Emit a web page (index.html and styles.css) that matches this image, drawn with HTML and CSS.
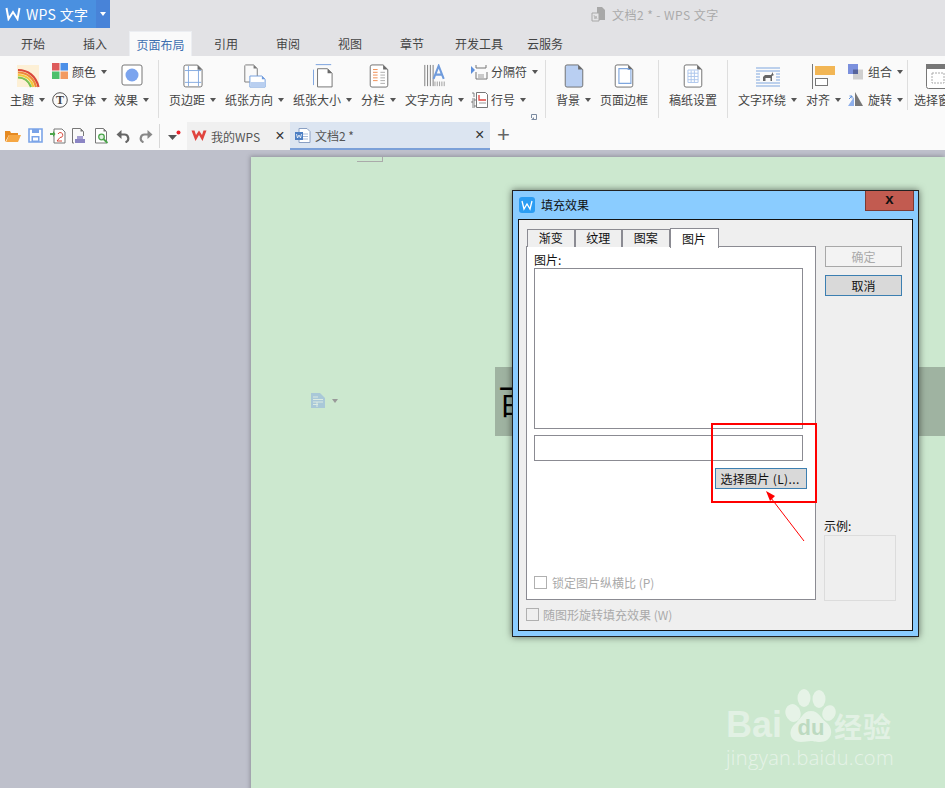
FILE: index.html
```html
<!DOCTYPE html>
<html lang="zh-CN">
<head>
<meta charset="utf-8">
<title>文档2 * - WPS 文字</title>
<link rel="stylesheet" href="styles.css">
</head>
<body>
<header class="titlebar">
  <div class="app-menu">
    <div class="app-name">
      <svg class="app-logo" width="16" height="14" viewBox="0 0 16 14"><path d="M1.500 1 L3.500 12 L8 5 L12.500 12 L14.500 1" fill="none" stroke="#fff" stroke-width="2"/></svg>
      <span>WPS 文字</span>
    </div>
    <div class="app-drop"><i class="tri white"></i></div>
  </div>
  <div class="doc-title">
    <svg width="15" height="15" viewBox="0 0 15 15"><path d="M6 0h5l3 3v10H6z" fill="#a8a8a8"/><path d="M1 6h7v8H1z" fill="#e4e4e6" stroke="#a8a8a8"/><path d="M3 8l1 4 1-3 1 3" stroke="#a8a8a8" fill="none" stroke-width=".7"/></svg>
    <span>文档2 * - WPS 文字</span>
  </div>
</header>

<nav class="tabs">
  <a class="tab first">开始</a>
  <a class="tab">插入</a>
  <a class="tab active">页面布局</a>
  <a class="tab spaced">引用</a>
  <a class="tab">审阅</a>
  <a class="tab">视图</a>
  <a class="tab">章节</a>
  <a class="tab dev">开发工具</a>
  <a class="tab last">云服务</a>
</nav>

<section class="ribbon">
  <div class="group g1">
    <div class="tool">
      <div class="icon"><svg width="24" height="24" viewBox="0 0 24 24"><rect x="1" y="1" width="22" height="22" fill="#fdf0d6"/><g fill="none" stroke-width="2.200"><path d="M2 6 C12 6 20 12 22.500 23" stroke="#d9483b"/><path d="M2 8.500 C11 8.500 18 14 20 23" stroke="#ee8a3a"/><path d="M2 11 C10 11 15.500 16 17.500 23" stroke="#f0c93c"/><path d="M2 13.500 C9 13.500 13 18 15 23" stroke="#7cc255"/><path d="M2 16 C7 16 11 19 12.500 23" stroke="#fdf0d6"/></g></svg></div>
      <div class="label">主题<i class="tri"></i></div>
    </div>
    <div class="small-col">
      <div class="small"><svg class="sm swatch" width="16" height="16" viewBox="0 0 16 16"><rect x="0" y="0" width="7.500" height="7.500" fill="#dd5b5b"/><rect x="8.500" y="0" width="7.500" height="7.500" fill="#4b8fe8"/><rect x="0" y="8.500" width="7.500" height="7.500" fill="#4cc06c"/><rect x="8.500" y="8.500" width="7.500" height="7.500" fill="#f29b62"/></svg>颜色<i class="tri"></i></div>
      <div class="small"><svg class="sm" width="16" height="16" viewBox="0 0 16 16"><circle cx="8" cy="8" r="7.300" fill="none" stroke="#555"/><text x="8" y="12" text-anchor="middle" class="t-glyph">T</text></svg>字体<i class="tri"></i></div>
    </div>
    <div class="tool">
      <div class="icon"><svg width="22" height="22" viewBox="0 0 22 22"><rect x="1" y="1" width="20" height="20" rx="2" fill="#fff" stroke="#777"/><circle cx="11" cy="11" r="6.500" fill="#7ba4ee"/></svg></div>
      <div class="label">效果<i class="tri"></i></div>
    </div>
  </div>
  <div class="sep"></div>

  <div class="group g2">
    <div class="tool">
      <div class="icon"><svg width="20" height="24" viewBox="0 0 22 26"><path d="M3 1h13l5 5v17a2 2 0 0 1-2 2H3a2 2 0 0 1-2-2V3a2 2 0 0 1 2-2z" fill="#fff" stroke="#6a6a6a"/><path d="M16 1l5 5h-5z" fill="#6a6a6a"/><path d="M2 7h18M2 20h18M6 2v22M17 6v18" stroke="#7ea6de" fill="none"/></svg></div>
      <div class="label">页边距<i class="tri"></i></div>
    </div>
    <div class="tool">
      <div class="icon"><svg width="23" height="24" viewBox="0 0 24 26"><path d="M2 1h9l4 4v8M1.500 1.500v18H7" fill="none" stroke="#777"/><path d="M11 1l4 4h-4z" fill="#777"/><path d="M7 13h13l3.500 3.500V25H7z" fill="#fff" stroke="#6f9bdc"/><path d="M7.500 19.500h16V25H7.500z" fill="#b9cff0"/><path d="M20 13l3.500 3.500H20z" fill="#6f9bdc"/></svg></div>
      <div class="label">纸张方向<i class="tri"></i></div>
    </div>
    <div class="tool">
      <div class="icon"><svg width="20" height="24" viewBox="0 0 22 26"><path d="M3 0.500h17" stroke="#6f9bdc" fill="none"/><path d="M.5 6v17" stroke="#6f9bdc" fill="none"/><path d="M5 5h11l5 5v15H5z" fill="#fff" stroke="#6a6a6a"/><path d="M16 5l5 5h-5z" fill="#6a6a6a"/></svg></div>
      <div class="label">纸张大小<i class="tri"></i></div>
    </div>
    <div class="tool">
      <div class="icon"><svg width="20" height="24" viewBox="0 0 21 26"><path d="M3 1h12l5 5v17a2 2 0 0 1-2 2H3a2 2 0 0 1-2-2V3a2 2 0 0 1 2-2z" fill="#fff" stroke="#6a6a6a"/><path d="M15 1l5 5h-5z" fill="#6a6a6a"/><path d="M4 6h5M4 9h5M4 12h5M4 15h5M4 18h5" stroke="#ef8a4d"/><path d="M12 9h5M12 12h5M12 15h5M12 18h5M12 21h5" stroke="#a9a9a9"/></svg></div>
      <div class="label">分栏<i class="tri"></i></div>
    </div>
    <div class="tool">
      <div class="icon"><svg width="23" height="24" viewBox="0 0 24 26"><path d="M1.500 1v23M4.500 1v23M7.500 1v23M10.500 1v23" stroke="#777"/><path d="M11 16 L16.500 2 L22 16 M13 11.500h7" fill="none" stroke="#6f9bdc" stroke-width="2.200"/><path d="M12.500 19v5M15 19v5M17.500 19v5M20 19v5M22.500 19v5" stroke="#999"/></svg></div>
      <div class="label">文字方向<i class="tri"></i></div>
    </div>
    <div class="small-col">
      <div class="small"><svg class="sm sm-wide" width="17" height="16" viewBox="0 0 17 16"><path d="M0 2l4 4-4 4z" fill="#5d8fdc"/><path d="M5 1v3h10V1M5 8v7h11V8" fill="none" stroke="#777"/><path d="M7 11h6M7 13h6" stroke="#999"/></svg>分隔符<i class="tri"></i></div>
      <div class="small"><svg class="sm sm-wide" width="17" height="16" viewBox="0 0 17 16"><path d="M5.500.5h9l2 2v13h-11z" fill="#fff" stroke="#777"/><path d="M8 3v5h7" fill="none" stroke="#e0443e" stroke-width="1.300"/><path d="M8 11h7" stroke="#999"/><path d="M1 1h2v4M1 7h3v2H1v2h3M1 13h3v2H1" fill="none" stroke="#666" stroke-width=".8"/></svg>行号<i class="tri"></i></div>
    </div>
    <svg class="launcher" width="6" height="6" viewBox="0 0 6 6"><path d="M.5 4V.5H5.500V5.500H2.500" fill="none" stroke="#7a8aa0"/><path d="M0 6l3-3v3z" fill="#7a8aa0"/></svg>
  </div>
  <div class="sep"></div>

  <div class="group g3">
    <div class="tool">
      <div class="icon"><svg width="20" height="24" viewBox="0 0 21 26"><path d="M3 1h12l5 5v17a2 2 0 0 1-2 2H3a2 2 0 0 1-2-2V3a2 2 0 0 1 2-2z" fill="#b9cff2" stroke="#6a6a6a"/><path d="M15 1l5 5h-5z" fill="#6a6a6a"/></svg></div>
      <div class="label">背景<i class="tri"></i></div>
    </div>
    <div class="tool">
      <div class="icon"><svg width="20" height="24" viewBox="0 0 21 26"><path d="M3 1h12l5 5v17a2 2 0 0 1-2 2H3a2 2 0 0 1-2-2V3a2 2 0 0 1 2-2z" fill="#fff" stroke="#6a6a6a"/><path d="M15 1l5 5h-5z" fill="#6a6a6a"/><path d="M5 5h10v1h3v15H5z" fill="none" stroke="#7ea6de" stroke-width="1.200"/></svg></div>
      <div class="label">页面边框</div>
    </div>
  </div>
  <div class="sep"></div>

  <div class="group g3">
    <div class="tool">
      <div class="icon"><svg width="20" height="24" viewBox="0 0 21 26"><path d="M3 1h12l5 5v17a2 2 0 0 1-2 2H3a2 2 0 0 1-2-2V3a2 2 0 0 1 2-2z" fill="#fff" stroke="#6a6a6a"/><path d="M15 1l5 5h-5z" fill="#6a6a6a"/><path d="M5 6.500h11V20H5zM5 10h11M5 13.500h11M5 17h11M8.500 7v13M12 7v13" fill="none" stroke="#a9c3ec"/></svg></div>
      <div class="label">稿纸设置</div>
    </div>
  </div>
  <div class="sep"></div>

  <div class="group g4">
    <div class="tool">
      <div class="icon"><svg width="24" height="20" viewBox="0 0 24 20" class="wrap-icon"><path d="M0 1h24M0 4h24M0 7h4M20 7h4M0 10h4M20 10h4M0 13h4M20 13h4M0 16h24M0 19h24" stroke="#7ea6de"/><path d="M7 14v-4l2-2h6l2-3v2l1 1-2 1v5h-1.500v-3H9.500v3z" fill="#666"/></svg></div>
      <div class="label">文字环绕<i class="tri"></i></div>
    </div>
    <div class="tool">
      <div class="icon"><svg width="23" height="25" viewBox="0 0 23 25"><path d="M.5 0v25" stroke="#777"/><rect x="3" y="2" width="20" height="9" fill="#f2b655"/><rect x="3.500" y="14.500" width="12" height="7" fill="#fff" stroke="#777"/></svg></div>
      <div class="label">对齐<i class="tri"></i></div>
    </div>
    <div class="small-col narrow">
      <div class="small"><svg class="sm sm-big" width="15" height="16" viewBox="0 0 15 16"><rect x="5" y="5.500" width="10" height="10" fill="#cfcfcf"/><rect x="0" y="0" width="10" height="10" fill="#7b90dd"/><rect x="5" y="5.500" width="5" height="4.500" fill="#56649c"/></svg>组合<i class="tri"></i></div>
      <div class="small"><svg class="sm sm-big" width="15" height="16" viewBox="0 0 15 16"><path d="M7 0 V14 H15z" fill="#777"/><path d="M6 5 V14 H0z" fill="#8fb0ec"/><path d="M1 7l3-3M4 4H1.500M4 4v2.500" stroke="#5d8fdc" fill="none"/></svg>旋转<i class="tri"></i></div>
    </div>
  </div>
  <div class="sep short"></div>

  <div class="group g5">
    <div class="tool">
      <div class="icon"><svg width="24" height="25" viewBox="0 0 24 25"><rect x=".5" y=".5" width="23" height="24" rx="2" fill="#fff" stroke="#777"/><rect x="0" y="0" width="24" height="5" fill="#777"/><rect x="6" y="9" width="12" height="10" fill="none" stroke="#aaa" stroke-dasharray="2 1"/></svg></div>
      <div class="label">选择窗格</div>
    </div>
  </div>
</section>

<section class="quickbar">
  <div class="qa">
    <svg width="16" height="14" viewBox="0 0 16 14"><path d="M0 2h5l1 2h7v2H4L0 13z" fill="#e58a22"/><path d="M4 6h12l-3 7H1z" fill="#f6a743"/></svg>
  </div>
  <div class="qa">
    <svg width="15" height="15" viewBox="0 0 15 15"><path d="M1 1h13v13H1z" fill="#fff" stroke="#7ba4e8" stroke-width="1.600"/><rect x="4" y="1" width="7" height="4" fill="#7ba4e8"/><rect x="3.500" y="8" width="8" height="6" fill="#7ba4e8"/><rect x="5" y="9.500" width="5" height="3" fill="#fff"/></svg>
  </div>
  <div class="qa tight">
    <svg width="16" height="16" viewBox="0 0 16 16"><path d="M4 1h8l3 3v11H4z" fill="#fff" stroke="#777"/><path d="M0 5h3V3l2.500 3L3 9V7H0z" fill="#4ca64c"/><path d="M8 6a2.500 2.500 0 1 1 2 3.500L7 13h5" fill="none" stroke="#d9483b"/></svg>
  </div>
  <div class="qa">
    <svg width="16" height="16" viewBox="0 0 16 16"><path d="M1.500.5h8l3 3V8M1.500.5V15H3" fill="none" stroke="#777"/><path d="M9.500.5l3 3h-3z" fill="#777"/><path d="M6 8h6v3H6z" fill="#a59fd0"/><path d="M4 11h10v4H4z" fill="#8b85c4"/></svg>
  </div>
  <div class="qa">
    <svg width="15" height="16" viewBox="0 0 15 16"><path d="M1.500.5h8l3 3V15h-11z" fill="#fff" stroke="#777"/><path d="M9.500.5l3 3h-3z" fill="#777"/><circle cx="7.500" cy="9" r="2.800" fill="#dff0df" stroke="#4ca64c" stroke-width="1.300"/><path d="M9.500 11l4 4" stroke="#4ca64c" stroke-width="1.800"/></svg>
  </div>
  <div class="qa">
    <svg width="14" height="14" viewBox="0 0 14 14"><path d="M2.500 5.500 H8 a4 4 0 0 1 1.500 7.800" fill="none" stroke="#666" stroke-width="2.200"/><path d="M5.500 1 L0.500 5.500 L5.500 10z" fill="#666"/></svg>
  </div>
  <div class="qa redo">
    <svg width="14" height="14" viewBox="0 0 14 14"><path d="M11.500 5.500 H6 a4 4 0 0 0 -1.500 7.800" fill="none" stroke="#888" stroke-width="2.200"/><path d="M8.500 1 L13.500 5.500 L8.500 10z" fill="#888"/></svg>
  </div>
  <div class="qsep"></div>
  <div class="mark">
    <svg width="14" height="12" viewBox="0 0 14 12"><path d="M0 5h9L4.500 10z" fill="#555"/><circle cx="10.500" cy="2.500" r="2" fill="#e8212a"/></svg>
  </div>
  <div class="doctab home">
    <svg class="wps-red" width="16" height="12" viewBox="0 0 16 12"><path d="M.5 .5 L4.500 11 L8 5 L11.500 11 L15.500 .5 L12.500 .5 L11 5 L8 .5 L5 5 L3.500 .5z" fill="#e0443e"/></svg>
    <span>我的WPS</span>
    <span class="close">×</span>
  </div>
  <div class="doctab current">
    <svg class="doc-ic" width="16" height="15" viewBox="0 0 16 15"><path d="M4 .5h8l3 3V14.500H4z" fill="#fff" stroke="#8aa0c4"/><path d="M7 6h6M7 8.500h6M7 11h6" stroke="#a9bcd9"/><rect x="0" y="4" width="8" height="8" fill="#4c7fc4"/><path d="M1.500 6l1 4 1.500-3 1.500 3 1-4" stroke="#fff" fill="none" stroke-width=".8"/></svg>
    <span>文档2 *</span>
    <span class="close">×</span>
  </div>
  <div class="plus">+</div>
</section>

<main class="canvas">
  <div class="page">
    <div class="margin-mark"></div>
    <div class="para-float">
      <svg width="14" height="15" viewBox="0 0 14 15"><path d="M0 0h9l5 5v10H0z" fill="#a9c8d8"/><path d="M2 4h5M2 6.500h10M2 9h10M2 11.500h5M6 9v5" stroke="#dcebe2" fill="none"/></svg>
      <i class="tri pale"></i>
    </div>
    <div class="band"><span>百</span></div>
    <div class="watermark">
      <div class="wm-row">
        <span class="wm-bai">Bai</span>
        <svg class="wm-paw" width="52" height="58" viewBox="0 0 52 58">
          <ellipse cx="8" cy="24" rx="7.500" ry="9" transform="rotate(-18 8 24)" fill="#e9f5ea"/>
          <ellipse cx="19" cy="9" rx="6.500" ry="9" fill="#e9f5ea"/>
          <ellipse cx="34" cy="10" rx="6.500" ry="9" fill="#e9f5ea"/>
          <ellipse cx="44" cy="24" rx="6.500" ry="8" transform="rotate(22 44 24)" fill="#e9f5ea"/>
          <path d="M26 22 C34 22 36 30 42 34 C50 42 46 53 35 53 C30 53 28 52 26 52 C23 52 20 53 16 53 C5 53 2 42 10 35 C16 30 18 22 26 22z" fill="#e9f5ea"/>
          <text x="26" y="46" text-anchor="middle" class="wm-du">du</text>
        </svg>
        <span class="wm-jy">经验</span>
      </div>
      <div class="wm-url">jingyan.baidu.com</div>
    </div>
  </div>

  <div class="dialog">
    <div class="dlg-title">
      <svg class="dlg-logo" width="16" height="16" viewBox="0 0 16 16"><rect width="16" height="16" rx="3" fill="#2b9df3"/><path d="M3 4l2 8 3-5 3 5 2-8" fill="none" stroke="#fff" stroke-width="1.300"/></svg>
      <span class="dlg-name">填充效果</span>
      <div class="dlg-close">x</div>
    </div>
    <div class="dlg-body">
      <div class="dlg-left">
        <div class="dlg-tabs">
          <div class="dtab">渐变</div>
          <div class="dtab">纹理</div>
          <div class="dtab">图案</div>
          <div class="dtab on">图片</div>
        </div>
        <div class="panel">
          <div class="field-label">图片:</div>
          <div class="listbox"></div>
          <div class="textbox"></div>
          <button class="btn pick">选择图片 (L)...</button>
          <label class="check inner"><i class="box"></i>锁定图片纵横比 (P)</label>
        </div>
        <label class="check outer"><i class="box"></i>随图形旋转填充效果 (W)</label>
      </div>
      <div class="dlg-right">
        <button class="btn side disabled">确定</button>
        <button class="btn side focus">取消</button>
        <div class="preview-label">示例:</div>
        <div class="preview"></div>
      </div>
    </div>
    <svg class="annot" width="405" height="445" viewBox="0 0 405 445">
      <rect x="199" y="233" width="104" height="78" fill="none" stroke="#f00" stroke-width="2"/>
      <path d="M291 350 L258 307" stroke="#f00" fill="none"/>
      <path d="M253 300 L262 305 L257 310z" fill="#f00"/>
    </svg>
  </div>
</main>
</body>
</html>
```

FILE: styles.css
```css
* { box-sizing: border-box; }
html, body { margin: 0; padding: 0; }
body {
  width: 945px;
  height: 788px;
  overflow: hidden;
  background: #e2e2e5;
  font-family: "Noto Sans CJK SC", "Liberation Sans", sans-serif;
  font-size: 12px;
  color: #444;
  display: flex;
  flex-direction: column;
}
svg { display: block; flex: none; }

.tri {
  display: inline-block;
  width: 0;
  height: 0;
  margin-left: 5px;
  border-left: 3px solid transparent;
  border-right: 3px solid transparent;
  border-top: 4px solid #555;
  flex: none;
}
.tri.white { border-top-color: #fff; margin: 0; }
.tri.pale { border-top-color: #999; margin-left: 7px; }

/* title bar */
.titlebar { height: 28px; display: flex; flex: none; }
.app-menu { display: flex; width: 110px; color: #fff; }
.app-name {
  width: 96px;
  background: #4a90e0;
  display: flex;
  align-items: center;
  padding-left: 5px;
  gap: 5px;
  font-size: 14px;
  letter-spacing: .3px;
}
.app-drop {
  width: 14px;
  background: #4883d8;
  display: flex;
  align-items: center;
  justify-content: center;
}
.doc-title {
  margin-left: 481px;
  display: flex;
  align-items: center;
  gap: 6px;
  color: #aaa;
  letter-spacing: .45px;
}

/* tabs */
.tabs { height: 28px; display: flex; align-items: flex-end; flex: none; }
.tab {
  width: 62px;
  height: 25px;
  line-height: 26px;
  text-align: center;
  color: #444;
}
.tab.first { margin-left: 2px; }
.tab.spaced { margin-left: 3px; }
.tab.dev { margin-left: 5px; }
.tab.last { width: 36px; margin-left: 17px; }
.tab.active {
  width: 63px;
  margin-left: 3px;
  background: #fafafa;
  border: 1px solid #eceef2;
  border-bottom: 0;
  color: #3f6fb0;
}

/* ribbon */
.ribbon {
  height: 66px;
  flex: none;
  background: #fafafa;
  display: flex;
  align-items: flex-start;
  padding-top: 8px;
  position: relative;
  overflow: hidden;
}
.group { display: flex; align-items: flex-start; padding: 0 10px; gap: 9px; flex: none; height: 44px; }
.group.g1 { width: 158px; gap: 7px; }
.group.g2 { width: 386px; position: relative; }
.group.g2 .small-col { margin-left: -2px; }
.group.g4 { width: 179px; gap: 9px; }
.group.g4 .small-col { margin-left: -2px; }
.group.g5 { padding: 0 0 0 6px; }
.launcher { position: absolute; right: 8px; top: 50px; }
.sep {
  width: 1px;
  height: 58px;
  margin-top: -4px;
  flex: none;
  background: #dedede;
}
.sep.short { height: 50px; }
.tool { display: flex; flex-direction: column; align-items: center; flex: none; height: 44px; }
.tool .icon {
  height: 28px;
  width: 100%;
  display: flex;
  justify-content: center;
  align-items: flex-start;
}
.wrap-icon { margin-top: 3px; }
.label { height: 16px; line-height: 16px; white-space: nowrap; display: flex; align-items: center; }
.small-col { display: flex; flex-direction: column; justify-content: space-between; height: 44px; flex: none; }
.small { height: 16px; line-height: 16px; display: flex; align-items: center; white-space: nowrap; }
.sm { margin-right: 4px; }
.swatch { margin-top: -2px; }
.sm-wide { margin-right: 3px; }
.sm-big { margin-right: 5px; }
.t-glyph { font-family: "Liberation Serif", serif; font-size: 12px; font-weight: 700; fill: #444; }

/* quick access */
.quickbar {
  height: 28px;
  flex: none;
  background: #fafafa;
  display: flex;
  align-items: stretch;
  padding-left: 5px;
}
.qa { display: flex; align-items: center; margin-right: 7px; padding-bottom: 1px; }
.qa.tight { margin-right: 5px; }
.qa.redo { margin-left: 2px; margin-right: 6px; }
.qsep { width: 1px; height: 24px; background: #d8d8d8; align-self: center; margin: 0 8px 0 0; }
.mark { display: flex; align-items: center; width: 19px; }
.doctab { display: flex; align-items: center; color: #555; }
.doctab.home { width: 103px; background: #f0f0f0; padding-left: 4px; gap: 4px; }
.doctab.current {
  width: 200px;
  background: #dce5f1;
  border-bottom: 2px solid #7ba0d8;
  padding-left: 5px;
  gap: 4px;
}
.home .close { margin-left: 11px; }
.current .close { margin-left: 117px; }
.close { font-size: 16px; color: #333; font-family: "Liberation Sans", sans-serif; }
.plus { font-size: 22px; color: #666; margin-left: 7px; line-height: 26px; font-family: "Liberation Sans", sans-serif; }

/* canvas */
.canvas {
  flex: 1;
  position: relative;
  background: #bec0cb;
  padding: 7px 0 0 251px;
  overflow: hidden;
}
.page {
  width: 694px;
  height: 640px;
  background: #cce8cf;
  position: relative;
  box-shadow: -1px -1px 4px rgba(90, 90, 100, .45);
}
.margin-mark {
  width: 26px;
  height: 5px;
  margin-left: 106px;
  border-right: 1px solid #aaa;
  border-bottom: 1px solid #aaa;
}
.para-float {
  position: absolute;
  left: 60px;
  top: 236px;
  display: flex;
  align-items: center;
}
.band {
  position: absolute;
  left: 244px;
  top: 210px;
  width: 450px;
  height: 69px;
  background: #9fb3a1;
  color: #000;
  font-size: 33px;
  line-height: 67px;
  padding-left: 3px;
  overflow: hidden;
}
.watermark { position: absolute; left: 475px; top: 532px; color: #e6f3e8; }
.wm-row { display: flex; align-items: flex-end; height: 61px; }
.wm-bai { font-family: "Liberation Sans", sans-serif; font-weight: 700; font-size: 36px; line-height: 40px; margin-bottom: 5px; opacity: .85; }
.wm-paw { margin: 0 -3px 3px 3px; opacity: .9; }
.wm-du { font-family: "Liberation Sans", sans-serif; font-size: 22px; font-weight: 700; fill: #bcd9c0; }
.wm-jy { font-size: 28px; line-height: 34px; font-weight: 700; margin-bottom: 7px; opacity: .85; letter-spacing: 1px; }
.wm-url { font-family: "Open Sans", sans-serif; font-size: 20px; line-height: 24px; font-weight: 300; letter-spacing: .35px; margin-top: -4px; }

/* dialog */
.dialog {
  position: absolute;
  left: 512px;
  top: 40px;
  width: 407px;
  height: 447px;
  border: 1px solid #222;
  background: #8accff;
  padding: 0 5px 5px 5px;
  display: flex;
  flex-direction: column;
  box-shadow: 0 0 7px rgba(0, 0, 0, .55);
  color: #111;
}
.dlg-title { height: 28px; display: flex; align-items: center; flex: none; position: relative; padding: 0 0 2px 1px; }
.dlg-logo { margin-right: 6px; margin-top: 2px; }
.dlg-name { font-size: 12px; }
.dlg-close {
  position: absolute;
  right: -1px;
  top: 0;
  width: 49px;
  height: 20px;
  background: #c25b50;
  border: 1px solid #7d3a33;
  border-top: 0;
  color: #111;
  text-align: center;
  font: 700 15px/16px "Liberation Sans", sans-serif;
}
.dlg-body {
  flex: 1;
  border: 1px solid #111;
  background: #efefef;
  display: flex;
  padding: 7px 0 0 7px;
}
.dlg-left { width: 290px; display: flex; flex-direction: column; flex: none; }
.dlg-tabs { display: flex; height: 20px; padding-left: 1px; align-items: flex-end; position: relative; z-index: 1; }
.dtab {
  width: 47.500px;
  height: 18px;
  background: #efefef;
  border: 1px solid #8b8b92;
  border-bottom: 0;
  text-align: center;
  line-height: 16px;
}
.dtab.on { height: 20px; width: 49px; background: #fff; line-height: 19px; margin-bottom: -1px; position: relative; }
.panel {
  height: 354px;
  margin-top: -1px;
  background: #fff;
  border: 1px solid #8b8b92;
  padding: 5px 8px 10px 7px;
  display: flex;
  flex-direction: column;
  align-items: flex-start;
}
.field-label { height: 16px; line-height: 15px; }
.listbox { width: 269px; height: 161px; border: 1px solid #8b8b92; background: #fff; flex: none; }
.textbox { width: 269px; height: 26px; margin-top: 6px; border: 1px solid #8b8b92; flex: none; }
.btn {
  font-family: inherit;
  font-size: 12px;
  color: #111;
  padding: 0 0 1px;
  background: #d9d9d9;
  border: 1px solid #3c7fb1;
  border-radius: 0;
  height: 21px;
  line-height: 17px;
}
.pick { width: 92px; margin-top: 7px; align-self: flex-end; letter-spacing: .35px; padding-right: 2px; }
.check { display: flex; align-items: center; color: #aaa; height: 13px; line-height: 13px; }
.check .box { width: 13px; height: 13px; border: 1px solid #b0b0b0; flex: none; }
.check.inner { margin-top: auto; gap: 5px; }
.check.outer { margin-top: 8px; gap: 4px; }
.dlg-right { padding: 19px 0 0 9px; display: flex; flex-direction: column; align-items: flex-start; }
.side { width: 77px; }
.side.disabled { background: #f3f3f3; border-color: #a8a8a8; color: #aaa; }
.side.focus { margin-top: 8px; }
.preview-label { margin-top: auto; margin-left: -1px; height: 16px; line-height: 14px; }
.preview { width: 72px; height: 66px; margin: 0 0 29px -1px; border: 1px solid #dcdcdc; }
.annot { position: absolute; left: 0; top: 0; pointer-events: none; }
```
